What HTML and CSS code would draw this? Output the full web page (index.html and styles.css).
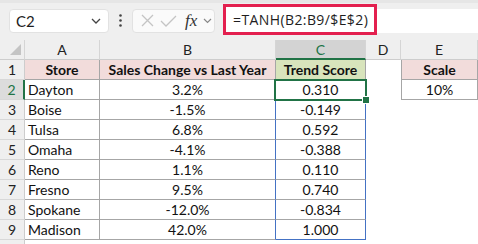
FILE: index.html
```html
<!DOCTYPE html>
<html lang="en">
<head>
    <meta charset="UTF-8">
    <title>TANH Trend Score</title>
    <link rel="stylesheet" href="styles.css">
</head>
<body>
    <div class="toolbar">
        <div class="namebox">
            <span>C2</span>
            <svg class="chev" width="10" height="6" viewBox="0 0 10 6"><path d="M1 1l4 4 4-4" fill="none" stroke="#444" stroke-width="1.3"/></svg>
        </div>
        <svg class="grip" width="3" height="13" viewBox="0 0 3 13"><circle cx="1.5" cy="1.5" r="1.3" fill="#444"/><circle cx="1.5" cy="6.5" r="1.3" fill="#444"/><circle cx="1.5" cy="11.5" r="1.3" fill="#444"/></svg>
        <div class="fxbox">
            <svg width="13" height="13" viewBox="0 0 13 13"><path d="M1 1l11 11M12 1L1 12" stroke="#c4c4c4" stroke-width="1.3"/></svg>
            <svg width="17" height="12" viewBox="0 0 17 12"><path d="M1 6l5 5L16 1" fill="none" stroke="#c4c4c4" stroke-width="1.3"/></svg>
            <span class="fx">fx</span>
            <svg width="9" height="6" viewBox="0 0 9 6"><path d="M1 1l3.5 3.5L8 1" fill="none" stroke="#888" stroke-width="1.2"/></svg>
        </div>
        <div class="formula">
            <div class="formula-hl">=TANH(B2:B9/$E$2)</div>
        </div>
    </div>

    <div class="sheet">
        <div class="corner"><span class="tri"></span></div>
        <div class="ch">A</div>
        <div class="ch">B</div>
        <div class="ch ch-sel">C</div>
        <div class="ch">D</div>
        <div class="ch">E</div>

        <div class="rh">1</div>
        <div class="c bold ctr pink">Store</div>
        <div class="c bold ctr pink">Sales Change vs Last Year</div>
        <div class="c bold ctr green">Trend Score</div>
        <div class="e"></div>
        <div class="c bold ctr pink lb">Scale</div>

        <div class="rh rh-sel">2</div>
        <div class="c">Dayton</div>
        <div class="c ctr">3.2%</div>
        <div class="c ctr blue active">0.310<span class="sel-box"><span class="handle"></span></span></div>
        <div class="e"></div>
        <div class="c ctr lb">10%</div>

        <div class="rh">3</div>
        <div class="c">Boise</div>
        <div class="c ctr edge">-1.5%</div>
        <div class="c ctr blue">-0.149</div>
        <div class="e"></div>
        <div class="e"></div>

        <div class="rh">4</div>
        <div class="c">Tulsa</div>
        <div class="c ctr edge">6.8%</div>
        <div class="c ctr blue">0.592</div>
        <div class="e"></div>
        <div class="e"></div>

        <div class="rh">5</div>
        <div class="c">Omaha</div>
        <div class="c ctr edge">-4.1%</div>
        <div class="c ctr blue">-0.388</div>
        <div class="e"></div>
        <div class="e"></div>

        <div class="rh">6</div>
        <div class="c">Reno</div>
        <div class="c ctr edge">1.1%</div>
        <div class="c ctr blue">0.110</div>
        <div class="e"></div>
        <div class="e"></div>

        <div class="rh">7</div>
        <div class="c">Fresno</div>
        <div class="c ctr edge">9.5%</div>
        <div class="c ctr blue">0.740</div>
        <div class="e"></div>
        <div class="e"></div>

        <div class="rh">8</div>
        <div class="c">Spokane</div>
        <div class="c ctr edge">-12.0%</div>
        <div class="c ctr blue">-0.834</div>
        <div class="e"></div>
        <div class="e"></div>

        <div class="rh">9</div>
        <div class="c">Madison</div>
        <div class="c ctr edge">42.0%</div>
        <div class="c ctr blue last">1.000</div>
        <div class="e"></div>
        <div class="e"></div>

        <div class="rh"></div>
        <div class="e"></div>
        <div class="e"></div>
        <div class="e"></div>
        <div class="e"></div>
        <div class="e"></div>
    </div>
</body>
</html>
```

FILE: styles.css
```css
body {
    margin: 0;
    width: 478px;
    height: 244px;
    overflow: hidden;
    background-color: #fff;
    font-family: Lato, "Noto Sans", sans-serif;
    color: #111;
}
.toolbar {
    height: 40px;
    box-sizing: border-box;
    border-top: 3px solid #e6e6e6;
    background-color: #efefef;
    display: flex;
    align-items: center;
    padding-left: 9px;
    padding-bottom: 2px;
}
.namebox {
    width: 100px;
    height: 24px;
    box-sizing: border-box;
    background-color: #fff;
    border: 1px solid #e2e2e2;
    border-radius: 4px;
    display: flex;
    align-items: center;
    justify-content: space-between;
    padding: 0 7px 0 6px;
    font-size: 15px;
    color: #1e1e1e;
}
.grip {
    margin: 0 10px;
}
.fxbox {
    width: 83px;
    height: 24px;
    box-sizing: border-box;
    background-color: #fafafa;
    border: 1px solid #e2e2e2;
    border-radius: 4px;
    display: flex;
    align-items: center;
    gap: 6px;
    padding-left: 8px;
}
.fx {
    font-family: "Liberation Serif", serif;
    font-style: italic;
    font-size: 17px;
    color: #333;
    margin-left: 2px;
}
.formula {
    flex: 1;
    height: 24px;
    margin-left: 8px;
    background-color: #fff;
    display: flex;
    align-items: center;
}
.formula-hl {
    width: 154px;
    height: 31px;
    box-sizing: border-box;
    border: 3px solid #e3204f;
    margin-top: -3px;
    padding-left: 7px;
    display: flex;
    align-items: center;
    background-color: #fff;
    font-family: "Open Sans", sans-serif;
    font-size: 14px;
    letter-spacing: 0.4px;
    color: #1e1e1e;
}
.sheet {
    display: grid;
    grid-template-columns: 25px 75px 176px 90px 35px 77px;
    grid-auto-rows: 20px;
    font-size: 14px;
}
.sheet > div {
    box-sizing: border-box;
    line-height: 19px;
    white-space: nowrap;
}
.corner {
    background-color: #efefef;
    border-right: 1px solid #d5d5d5;
    border-bottom: 1px solid #cdcdcd;
    position: relative;
}
.tri {
    position: absolute;
    right: 3px;
    bottom: 4px;
    width: 0;
    height: 0;
    border-left: 11px solid transparent;
    border-bottom: 11px solid #c4c4c4;
}
.ch {
    background-color: #efefef;
    border-right: 1px solid #d5d5d5;
    border-bottom: 1px solid #cdcdcd;
    text-align: center;
    color: #222;
}
.ch-sel {
    background-color: #d3d3d3;
    color: #217346;
    border-bottom: 2px solid #217346;
}
.rh {
    background-color: #efefef;
    border-right: 1px solid #cdcdcd;
    border-bottom: 1px solid #d8d8d8;
    text-align: center;
    color: #222;
}
.rh-sel {
    background-color: #dcdcdc;
    color: #217346;
    border-right: 2px solid #217346;
}
.c {
    border-right: 1px solid #a6a6a6;
    border-bottom: 1px solid #a6a6a6;
    padding-left: 3px;
}
.lb {
    border-left: 1px solid #a6a6a6;
}
.ctr {
    text-align: center;
    padding-left: 0;
}
.bold {
    font-weight: bold;
}
.pink {
    background-color: #f2dcdb;
}
.green {
    background-color: #d8e4bc;
}
/* formula range C2:C9 outlined in blue */
.edge {
    border-right-color: #4472c4;
}
.blue {
    border-right-color: #4472c4;
}
.last {
    border-bottom-color: #4472c4;
}
.active {
    position: relative;
}
.sel-box {
    position: absolute;
    left: -2px;
    top: -1px;
    right: -2px;
    bottom: -2px;
    border: 2px solid #217346;
}
.handle {
    position: absolute;
    right: -5px;
    bottom: -5px;
    width: 6px;
    height: 6px;
    background-color: #217346;
    border: 1px solid #fff;
}
```
